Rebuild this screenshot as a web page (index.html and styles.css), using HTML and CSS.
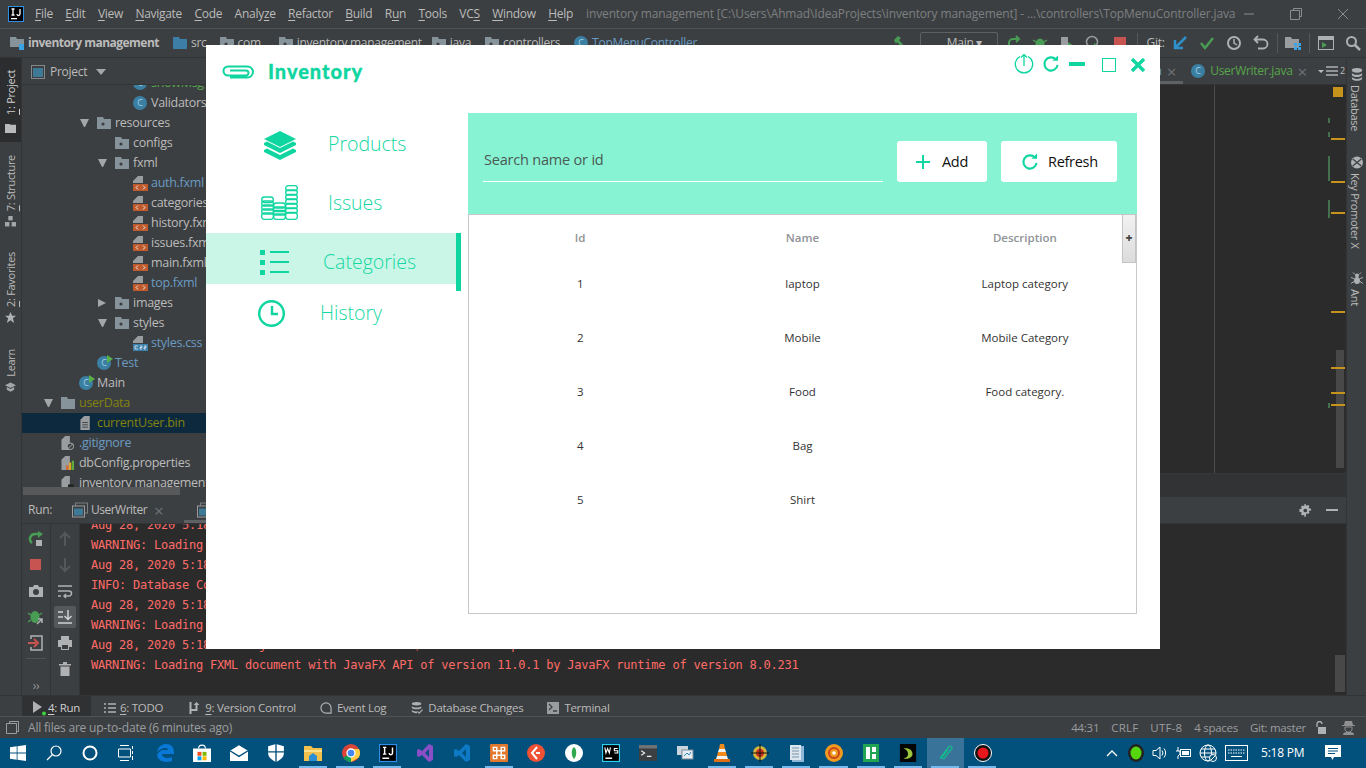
FILE: index.html
```html
<!DOCTYPE html>
<html lang="en">
<head>
<meta charset="utf-8">
<title>Inventory</title>
<link rel="stylesheet" href="styles.css">
</head>
<body>
<svg class="defs" aria-hidden="true">
  <symbol id="folder" viewBox="0 0 14 12"><path d="M0 0h6l1 2h7v10H0z" fill="#87939a"/><circle cx="6" cy="7" r="1.6" fill="#3c3f41"/></symbol>
  <symbol id="folderp" viewBox="0 0 14 12"><path d="M0 0h6l1 2h7v10H0z" fill="#87939a"/></symbol>
  <symbol id="fxml" viewBox="0 0 15 15"><path d="M5 0h5v7H0V5z" fill="#9a9da0"/><rect y="8" width="15" height="7" fill="#c0592b"/><path d="M5 9.5 3 11.500l2 2M10 9.500l2 2-2 2" fill="none" stroke="#eee" stroke-width="1"/></symbol>
  <symbol id="cssf" viewBox="0 0 15 15"><path d="M5 0h5v7H0V5z" fill="#9a9da0"/><rect y="8" width="15" height="7" fill="#3a82ab"/><path d="M2 10h3M2 13h3M2 10v3M7 10h2v1.500H7V13h2M11 10h2v1.500h-2V13h2" fill="none" stroke="#dde" stroke-width=".9"/></symbol>
  <symbol id="tabicon" viewBox="0 0 16 15"><rect x="3.500" y=".5" width="12" height="10" fill="none" stroke="#7b7f82"/><rect x=".5" y="3.500" width="12" height="11" fill="#3c3f41" stroke="#9a9da0"/><rect x="2" y="6" width="9" height="7" fill="#3e7a95"/></symbol>
</svg>

<div class="ide">
  <header class="menubar">
    <svg class="ij-logo" viewBox="0 0 16 16"><rect width="16" height="16" fill="#000"/><rect x=".5" y=".5" width="15" height="15" fill="none" stroke="#2f8fe6"/><rect x="3" y="12" width="6" height="1.300" fill="#fff"/><path d="M3.500 3h3M5 3v6M3.500 9h3M12 3v5a1.500 1.500 0 0 1-3 0" fill="none" stroke="#fff" stroke-width="1.300"/></svg>
    <nav class="menus">
      <span><u>F</u>ile</span><span><u>E</u>dit</span><span><u>V</u>iew</span><span><u>N</u>avigate</span><span><u>C</u>ode</span><span>Analy<u>z</u>e</span><span><u>R</u>efactor</span><span><u>B</u>uild</span><span>R<u>u</u>n</span><span><u>T</u>ools</span><span>VC<u>S</u></span><span><u>W</u>indow</span><span><u>H</u>elp</span>
    </nav>
    <span class="wintitle">inventory management [C:\Users\Ahmad\IdeaProjects\inventory management] - ...\controllers\TopMenuController.java</span>
    <div class="winctl">
      <svg viewBox="0 0 12 12"><path d="M1 6h10" stroke="#8a8d8f"/></svg>
      <svg viewBox="0 0 12 12"><path d="M3.500 2.500V.5h8v8h-2M.5 2.500h9v9h-9z" fill="none" stroke="#8a8d8f"/></svg>
      <svg viewBox="0 0 12 12"><path d="M1 1l10 10M11 1 1 11" stroke="#8a8d8f"/></svg>
    </div>
  </header>

  <div class="navbar">
    <div class="crumbs">
      <span class="crumb bold"><svg class="ic14" viewBox="0 0 14 14"><path d="M0 1h6l1 2h7v8H0z" fill="#87939a"/><rect x="9" y="8" width="6" height="6" fill="#3aa3e3"/></svg>inventory management</span>
      <span class="crumb"><svg class="ic14" viewBox="0 0 14 12"><path d="M0 0h6l1 2h7v10H0z" fill="#3d7ea6"/></svg>src</span>
      <span class="crumb"><svg class="ic14"><use href="#folder"/></svg>com</span>
      <span class="crumb"><svg class="ic14"><use href="#folder"/></svg>inventory.management</span>
      <span class="crumb"><svg class="ic14"><use href="#folder"/></svg>java</span>
      <span class="crumb"><svg class="ic14"><use href="#folder"/></svg>controllers</span>
      <span class="crumb blue"><span class="cls">C</span>TopMenuController</span>
    </div>
    <div class="navtools">
      <svg class="hammer" viewBox="0 0 16 16"><path d="M2 5l4-4 3 2-2 2 7 8-2 2-7-8-1 2z" fill="#499c54"/></svg>
      <span class="runcfg">Main ▾</span>
      <span class="tool"><svg viewBox="0 0 16 16"><path d="M3 13V8a4 4 0 0 1 4-4h5M10 1l3 3-3 3" fill="none" stroke="#499c54" stroke-width="2"/></svg></span>
      <span class="tool"><svg viewBox="0 0 16 16"><ellipse cx="8" cy="9" rx="4.500" ry="5.500" fill="#499c54"/><path d="M1 5l3 2M15 5l-3 2M1 13l3-2M15 13l-3-2" stroke="#499c54" stroke-width="1.500"/></svg></span>
      <span class="tool"><svg viewBox="0 0 16 16"><rect x="2" y="2" width="7" height="12" fill="#9a9da0"/><path d="M9 7l6 4-6 4z" fill="#499c54"/></svg></span>
      <span class="tool"><svg viewBox="0 0 16 16"><circle cx="7" cy="7" r="5.500" fill="none" stroke="#9a9da0" stroke-width="1.500"/><path d="M9 8l6 4-6 4z" fill="#499c54"/></svg></span>
      <span class="tool"><svg viewBox="0 0 16 16"><rect x="2" y="2" width="12" height="12" fill="#c75450"/></svg></span>
      <span class="sep s1"></span>
      <span class="gitlabel">Git:</span>
      <span class="tool t27"><svg viewBox="0 0 16 16"><path d="M14 2 4 12M3 5v8h8" fill="none" stroke="#2f8fc9" stroke-width="2.500"/></svg></span>
      <span class="tool t27"><svg viewBox="0 0 16 16"><path d="M2 8l4 5 8-10" fill="none" stroke="#499c54" stroke-width="2.500"/></svg></span>
      <span class="tool t27"><svg viewBox="0 0 16 16"><circle cx="8" cy="8" r="6" fill="none" stroke="#aeb0b2" stroke-width="2"/><path d="M8 4v4l3 2" fill="none" stroke="#aeb0b2" stroke-width="1.500"/></svg></span>
      <span class="tool t27"><svg viewBox="0 0 16 16"><path d="M5 1 1.500 4.500 5 8M2 4.500h8a4.500 4.500 0 0 1 0 9H5" fill="none" stroke="#aeb0b2" stroke-width="1.800"/></svg></span>
      <span class="sep s2"></span>
      <span class="tool t29"><svg viewBox="0 0 16 16"><path d="M0 2h6l1 2h7v9H0z" fill="#9a9da0"/><rect x="9" y="8" width="3" height="3" fill="#3aa3e3"/><rect x="13" y="8" width="3" height="3" fill="#3aa3e3"/><rect x="9" y="12" width="3" height="3" fill="#3aa3e3"/><rect x="13" y="12" width="3" height="3" fill="#3aa3e3"/></svg></span>
      <span class="sep s3"></span>
      <span class="tool t27"><svg viewBox="0 0 16 16"><rect x=".5" y="1.500" width="15" height="13" fill="none" stroke="#aeb0b2"/><rect x="1" y="2" width="14" height="3" fill="#aeb0b2"/><path d="M4 7l5 3-5 3z" fill="#499c54"/></svg></span>
      <span class="tool"><svg viewBox="0 0 16 16"><circle cx="6.500" cy="6.500" r="4.500" fill="none" stroke="#aeb0b2" stroke-width="2"/><path d="M10 10l5 5" stroke="#aeb0b2" stroke-width="2.500"/></svg></span>
    </div>
  </div>

  <div class="workspace">
    <aside class="lstripe">
      <div class="vtab active"><span class="vtext"><u>1</u>: Project</span><svg viewBox="0 0 12 10"><path d="M0 0h5l1 1h6v9H0z" fill="#b8babc"/></svg></div>
      <div class="vtab structure"><span class="vtext"><u>7</u>: Structure</span><svg viewBox="0 0 10 10"><rect x="3" width="4" height="4" fill="#a4a6a8"/><rect y="5.500" width="4" height="4" fill="#a4a6a8"/><rect x="6" y="5.500" width="4" height="4" fill="#a4a6a8"/></svg></div>
      <div class="vtab favorites"><span class="vtext"><u>2</u>: Favorites</span><svg viewBox="0 0 12 12"><path d="M6 0l1.800 4H12L8.600 6.800 10 12 6 9 2 12l1.400-5.200L0 4h4.200z" fill="#b0b2b4"/></svg></div>
      <div class="vtab learn"><span class="vtext">Learn</span><svg viewBox="0 0 12 11"><path d="M6 0l6 3-6 3-6-3z" fill="#a4a6a8"/><path d="M2 5v3l4 2 4-2V5L6 7z" fill="#a4a6a8"/></svg></div>
    </aside>

    <div class="center">
      <div class="upper">
        <section class="project">
          <div class="panelhead">
            <svg class="ic14" viewBox="0 0 14 14"><rect x=".5" y=".5" width="13" height="13" fill="none" stroke="#85888a"/><rect x="2" y="3" width="10" height="9" fill="#3e7a95"/></svg>
            <span>Project</span><span class="caret"></span>
          </div>
          <div class="tree">
            <div class="row l4 cut"><span class="arrow"></span><span class="cls">C</span><span class="green">showMsg</span></div>
            <div class="row l4"><span class="arrow"></span><span class="cls">C</span><span>Validators</span></div>
            <div class="row l2"><span class="arrow down"></span><svg class="ic14"><use href="#folder"/></svg><span>resources</span></div>
            <div class="row l3"><span class="arrow"></span><svg class="ic14"><use href="#folder"/></svg><span>configs</span></div>
            <div class="row l3"><span class="arrow down"></span><svg class="ic14"><use href="#folder"/></svg><span>fxml</span></div>
            <div class="row l4"><span class="arrow"></span><svg class="ic15"><use href="#fxml"/></svg><span class="blue">auth.fxml</span></div>
            <div class="row l4"><span class="arrow"></span><svg class="ic15"><use href="#fxml"/></svg><span>categories.fxml</span></div>
            <div class="row l4"><span class="arrow"></span><svg class="ic15"><use href="#fxml"/></svg><span>history.fxml</span></div>
            <div class="row l4"><span class="arrow"></span><svg class="ic15"><use href="#fxml"/></svg><span>issues.fxml</span></div>
            <div class="row l4"><span class="arrow"></span><svg class="ic15"><use href="#fxml"/></svg><span>main.fxml</span></div>
            <div class="row l4"><span class="arrow"></span><svg class="ic15"><use href="#fxml"/></svg><span class="blue">top.fxml</span></div>
            <div class="row l3"><span class="arrow right"></span><svg class="ic14"><use href="#folder"/></svg><span>images</span></div>
            <div class="row l3"><span class="arrow down"></span><svg class="ic14"><use href="#folder"/></svg><span>styles</span></div>
            <div class="row l4"><span class="arrow"></span><svg class="ic15"><use href="#cssf"/></svg><span class="blue">styles.css</span></div>
            <div class="row l2"><span class="arrow"></span><span class="cls runnable">C</span><span class="blue">Test</span></div>
            <div class="row l1"><span class="arrow"></span><span class="cls runnable">C</span><span>Main</span></div>
            <div class="row l0"><span class="arrow down"></span><svg class="ic14"><use href="#folderp"/></svg><span class="olive">userData</span></div>
            <div class="row l1 selected"><span class="arrow"></span><svg class="ic14" viewBox="0 0 14 15"><path d="M5 0h6v15H1V4z" fill="#9a9da0"/><path d="M3 7h6M3 9.500h6M3 12h6" stroke="#3c3f41"/></svg><span class="olive">currentUser.bin</span></div>
            <div class="row l0"><span class="arrow"></span><svg class="ic14" viewBox="0 0 14 15"><path d="M4 0h5v15H0V4z" fill="#9a9da0"/><circle cx="9.500" cy="11" r="3.500" fill="#3c3f41" stroke="#aeb0b2"/><path d="M7 13.500l5-5" stroke="#aeb0b2"/></svg><span class="blue">.gitignore</span></div>
            <div class="row l0"><span class="arrow"></span><svg class="ic14" viewBox="0 0 14 15"><path d="M4 0h5v15H0V4z" fill="#9a9da0"/><rect x="5" y="10" width="2.500" height="5" fill="#d9662f"/><rect x="8" y="7" width="2.500" height="8" fill="#e0a52b"/><rect x="11" y="5" width="2.500" height="10" fill="#5faa3c"/></svg><span>dbConfig.properties</span></div>
            <div class="row l0"><span class="arrow"></span><svg class="ic14" viewBox="0 0 14 15"><path d="M4 0h5v15H0V4z" fill="#9a9da0"/><rect x="7" y="9" width="6" height="6" fill="#222"/><path d="M8.500 12.500h3" stroke="#ddd"/></svg><span>inventory management.iml</span></div>
            <div class="hscroll"></div>
          </div>
        </section>

        <section class="editor">
          <div class="tabs">
            <div class="tab current"><span class="blue">TopMenuController.java</span><span class="x">×</span></div>
            <div class="tab"><span class="cls">C</span><span class="green">UserWriter.java</span><span class="x">×</span></div>
            <div class="tabmore"><span class="tiny-caret"></span><svg viewBox="0 0 12 10"><path d="M0 1h12M0 5h12M0 9h12" stroke="#aeb0b2" stroke-width="1.500"/></svg><span>2</span></div>
          </div>
          <div class="code">
            <span class="rmargin"></span>
            <span class="scrollv"></span>
            <span class="warn"></span>
            <span class="mk g g1"></span><span class="mk g g2"></span><span class="mk g g3"></span><span class="mk g g4"></span><span class="mk g g5"></span>
            <span class="mk o o1"></span><span class="mk o o2"></span><span class="mk o o3"></span><span class="mk o o4"></span><span class="mk o o5"></span><span class="mk o o6"></span><span class="mk o o7"></span>
          </div>
          <div class="editfoot"></div>
        </section>
      </div>

      <section class="runpanel">
        <div class="runhead">
          <span class="runlabel">Run:</span>
          <span class="runtab"><svg class="ic16"><use href="#tabicon"/></svg><span>UserWriter</span><span class="x">×</span></span>
          <span class="runtab on"><svg class="ic16"><use href="#tabicon"/></svg><span class="greendot"></span></span>
          <span class="grow"></span>
          <svg class="gear" viewBox="0 0 14 14"><path d="M7 0l1 2 2-.800 1 1L10.500 4.500l2.500.5v2l-2.500.5.800 2-1.300 1.300-2-.800L7 14H6l-.5-2.500-2 .800L2.200 11l.8-2L.5 8.500V5.500L3 5 2.200 3 3.500 1.700l2 .800L6 0z" fill="#afb1b3"/><circle cx="6.800" cy="7" r="2" fill="#3c3f41"/></svg>
          <svg class="dash" viewBox="0 0 12 12"><path d="M0 6h12" stroke="#afb1b3" stroke-width="2"/></svg>
        </div>
        <div class="runbody">
          <div class="rtools">
            <svg viewBox="0 0 16 16"><path d="M13 3H7a5 5 0 0 0-3 9" fill="none" stroke="#499c54" stroke-width="2.500"/><path d="M10 0l5 3-5 4z" fill="#499c54"/><rect x="8" y="9" width="6" height="6" fill="#afb1b3"/></svg>
            <svg viewBox="0 0 16 16"><rect x="2" y="2" width="11" height="11" fill="#c75450"/></svg>
            <svg viewBox="0 0 16 16"><path d="M1 4h4l1-2h4l1 2h4v10H1z" fill="#afb1b3"/><circle cx="8" cy="9" r="3" fill="#3c3f41"/></svg>
            <svg viewBox="0 0 16 16"><ellipse cx="7" cy="8" rx="4.500" ry="6" fill="#499c54"/><path d="M0 4l3 2M14 4l-3 2M0 13l3-2" stroke="#499c54" stroke-width="1.500"/><path d="M9 15l5-5M10 10h4v4" fill="none" stroke="#afb1b3" stroke-width="1.500"/></svg>
            <svg viewBox="0 0 16 16"><path d="M3 4V1h11v14H3v-3" fill="none" stroke="#afb1b3" stroke-width="1.500"/><path d="M0 8h8M6 4l4 4-4 4" fill="none" stroke="#c75450" stroke-width="2"/></svg>
            <span class="hrule"></span>
            <span class="more">››</span>
          </div>
          <div class="rtools second">
            <svg viewBox="0 0 16 16"><path d="M8 15V2M3 7l5-5 5 5" fill="none" stroke="#55585a" stroke-width="2"/></svg>
            <svg viewBox="0 0 16 16"><path d="M8 1v13M3 9l5 5 5-5" fill="none" stroke="#55585a" stroke-width="2"/></svg>
            <svg viewBox="0 0 16 16"><path d="M1 3h14M1 8h11a2.500 2.500 0 0 1 0 5H7M9 11l-2 2 2 2M1 13h3" fill="none" stroke="#afb1b3" stroke-width="1.500"/></svg>
            <span class="activebox"><svg viewBox="0 0 16 16"><path d="M1 3h5M1 8h5M1 14h14M11 1v9M7.500 7l3.500 3.500L14.500 7" fill="none" stroke="#d0d2d3" stroke-width="1.500"/></svg></span>
            <svg viewBox="0 0 16 16"><path d="M4 1h8v4H4zM1 5h14v7h-3v3H4v-3H1z" fill="#afb1b3"/><rect x="5" y="10" width="6" height="4" fill="#3c3f41"/></svg>
            <svg viewBox="0 0 16 16"><path d="M2 3h12v1.500H2zM6 1h4v2H6zM3.500 5.500h9V15h-9z" fill="#afb1b3"/></svg>
          </div>
          <pre class="console">Aug 28, 2020 5:18:02 PM javafx.fxml.FXMLLoader$ValueElement processValue
WARNING: Loading FXML document with JavaFX API of version 11.0.1 by JavaFX runtime of version 8.0.231
Aug 28, 2020 5:18:04 PM inventory.management.Main start
INFO: Database Connected
Aug 28, 2020 5:18:04 PM javafx.fxml.FXMLLoader$ValueElement processValue
WARNING: Loading FXML document with JavaFX API of version 11.0.1 by JavaFX runtime of version 8.0.231
Aug 28, 2020 5:18:09 PM javafx.fxml.FXMLLoader$ValueElement processValue
WARNING: Loading FXML document with JavaFX API of version 11.0.1 by JavaFX runtime of version 8.0.231</pre>
          <span class="conscroll"></span>
        </div>
      </section>
    </div>

    <aside class="rstripe">
      <div class="rtab database"><svg viewBox="0 0 12 14"><ellipse cx="6" cy="2.500" rx="5.500" ry="2.500" fill="#aeb0b2"/><path d="M.5 5c1 3 10 3 11 0v2.500c-1 3-10 3-11 0zM.5 9.500c1 3 10 3 11 0v2c-1 3-10 3-11 0z" fill="#aeb0b2"/></svg><span>Database</span></div>
      <div class="rtab keyp"><svg viewBox="0 0 14 14"><circle cx="7" cy="7" r="7" fill="#aeb0b2"/><path d="M2 3l10 8M12 3 2 11" stroke="#3c3f41" stroke-width="1.500"/></svg><span>Key Promoter X</span></div>
      <div class="rtab ant"><svg viewBox="0 0 12 12"><ellipse cx="6" cy="3" rx="2" ry="2" fill="#aeb0b2"/><ellipse cx="6" cy="8" rx="3" ry="3.500" fill="#aeb0b2"/><path d="M0 5l3 1M12 5 9 6M0 11l3-2M12 11 9 9M2 0l2 2M10 0 8 2" stroke="#aeb0b2"/></svg><span>Ant</span></div>
    </aside>
  </div>

  <div class="toolstrip">
    <span class="tw on"><svg class="tw-run" viewBox="0 0 14 16"><path d="M0 1l9 6-9 6z" fill="#afb1b3"/><circle cx="11" cy="13.500" r="2" fill="#3fd13f"/></svg><span class="lt"><u>4</u>: Run</span></span>
    <span class="tw todo"><svg viewBox="0 0 12 10"><path d="M0 1h2M4 1h8M0 5h2M4 5h8M0 9h2M4 9h8" stroke="#afb1b3" stroke-width="1.500"/></svg><span><u>6</u>: TODO</span></span>
    <span class="tw vc"><svg viewBox="0 0 11 12"><path d="M1 0h2v12H1zM3 7h4V3H5l3-3 3 3H9v6H3z" fill="#afb1b3"/></svg><span><u>9</u>: Version Control</span></span>
    <span class="tw ev"><svg viewBox="0 0 13 13"><path d="M12 12H6.500a5.500 5.500 0 1 1 5.500-5.500z" fill="none" stroke="#afb1b3" stroke-width="1.300"/></svg><span>Event Log</span></span>
    <span class="tw db"><svg viewBox="0 0 13 14"><ellipse cx="6" cy="2" rx="5.500" ry="2" fill="#aeb0b2"/><path d="M.5 5c1 2 10 2 11 0v2c-1 2-10 2-11 0zM.5 9c1 2 5 2 6 2v2c-2 0-5-.500-6-2z" fill="#aeb0b2"/><path d="M7 11l2 2 4-4" fill="none" stroke="#aeb0b2" stroke-width="1.300"/></svg><span>Database Changes</span></span>
    <span class="tw term"><svg viewBox="0 0 12 12"><rect width="12" height="12" fill="#9a9da0"/><path d="M2 2l3 3-3 3M6 9h4" fill="none" stroke="#3c3f41" stroke-width="1.300"/></svg><span>Terminal</span></span>
  </div>

  <footer class="status">
    <svg class="ic13" viewBox="0 0 13 13"><path d="M3.500 2.500V.5h9v10h-2M.5 2.500h10v10H.5z" fill="none" stroke="#9a9da0"/></svg>
    <span class="smsg">All files are up-to-date (6 minutes ago)</span>
    <span class="grow"></span>
    <span class="stat">44:31</span><span class="stat roomy">CRLF</span><span class="stat roomy">UTF-8</span><span class="stat">4 spaces</span><span class="stat">Git: master</span>
    <svg class="lock" viewBox="0 0 11 13"><path d="M2 6V3a2.500 2.500 0 0 1 5 0" fill="none" stroke="#afb1b3" stroke-width="1.300"/><rect x="3" y="6" width="8" height="7" fill="#afb1b3"/></svg>
    <svg class="hector" viewBox="0 0 13 14"><path d="M3 0h7l1 4h2v1H0V4h2z" fill="#8e9092"/><path d="M3 6h7v3l-2 2H5L3 9z" fill="none" stroke="#8e9092"/><path d="M1 14c0-3 3-3 5.500-3S12 11 12 14z" fill="#8e9092"/></svg>
  </footer>
</div>

<footer class="taskbar">
  <span class="tb"><svg viewBox="0 0 16 16"><path d="M0 2.300 6.700 1.300v6.300H0zM7.500 1.200 16 0v7.600H7.500zM0 8.400h6.700v6.300L0 13.700zM7.500 8.400H16V16l-8.500-1.200z" fill="#fff"/></svg></span>
  <span class="tb"><svg viewBox="0 0 16 16"><circle cx="10" cy="6" r="5" fill="none" stroke="#fff" stroke-width="1.200"/><path d="M6.500 9.500 1 15" stroke="#fff" stroke-width="1.300"/></svg></span>
  <span class="tb"><svg viewBox="0 0 16 16"><circle cx="8" cy="8" r="6.500" fill="none" stroke="#fff" stroke-width="2"/></svg></span>
  <span class="tb"><svg viewBox="0 0 16 16"><path d="M2 .5h9M2 15.500h9M.5 4h12v8H.5zM14.500 1v3M14.500 6v3M14.500 11v4" fill="none" stroke="#fff"/></svg></span>
  <span class="tb pin first"><svg viewBox="0 0 18 18"><path d="M1 8C2 2 7 0 10 0c5 0 8 3 8 9v1H6c0 4 6 5 10 3v4c-6 2-14 1-15-6 1-3 4-4 5-5h6c0-3-6-3-11 2z" fill="#0a78d7"/></svg></span>
  <span class="tb pin"><svg viewBox="0 0 16 16"><path d="M0 4h16v12H0z" fill="#fff"/><path d="M5 4a3 3 0 0 1 6 0" fill="none" stroke="#fff"/><rect x="4" y="7" width="3.500" height="3.500" fill="#f25022"/><rect x="8.500" y="7" width="3.500" height="3.500" fill="#7fba00"/><rect x="4" y="11" width="3.500" height="3.500" fill="#00a4ef"/><rect x="8.500" y="11" width="3.500" height="3.500" fill="#ffb900"/></svg></span>
  <span class="tb pin"><svg viewBox="0 0 16 14"><path d="M0 5l8-5 8 5v9H0z" fill="#fff"/><path d="M0 5l8 5 8-5" fill="none" stroke="#02507c" stroke-width="1.200"/></svg></span>
  <span class="tb pin"><svg viewBox="0 0 14 16"><path d="M7 0l7 2v6c0 4-3 6-7 8-4-2-7-4-7-8V2z" fill="#fff"/><path d="M7 0v16M0 7h14" stroke="#02507c" stroke-width="1.200"/></svg></span>
  <span class="tb pin live"><svg viewBox="0 0 18 16"><path d="M0 1h7l2 2h9v13H0z" fill="#f3c14b"/><rect x="0" y="5" width="18" height="2" fill="#fbe08a"/><path d="M5 16v-5l4-3 4 3v5z" fill="#2c8fd6"/></svg></span>
  <span class="tb pin live"><svg viewBox="0 0 18 18"><circle cx="9" cy="9" r="9" fill="#db4437"/><path d="M9 9 1.300 13.500A9 9 0 0 0 9 18z" fill="#0f9d58"/><path d="M9 5h8a9 9 0 0 1-.2 8.500L9 18z" fill="#ffcd40"/><circle cx="9" cy="9" r="4" fill="#4285f4" stroke="#fff" stroke-width="1.300"/></svg></span>
  <span class="tb pin live"><svg viewBox="0 0 16 16"><rect width="16" height="16" fill="#000"/><rect x=".5" y=".5" width="15" height="15" fill="none" stroke="#2f8fe6"/><rect x="3" y="12" width="6" height="1.300" fill="#fff"/><path d="M3.500 3h3M5 3v6M3.500 9h3M12 3v5a1.500 1.500 0 0 1-3 0" fill="none" stroke="#fff" stroke-width="1.300"/></svg></span>
  <span class="tb pin"><svg viewBox="0 0 16 18"><path d="M12 0l4 2v14l-4 2-7-7-3 2-2-1V6l2-1 3 2zM12 5 8 9l4 4z" fill="#8a4fc7" fill-rule="evenodd"/></svg></span>
  <span class="tb pin"><svg viewBox="0 0 16 18"><path d="M12 0l4 2v14l-4 2-7-7-3 2-2-1V6l2-1 3 2zM12 5 8 9l4 4z" fill="#0e7ac6" fill-rule="evenodd"/></svg></span>
  <span class="tb pin live"><svg viewBox="0 0 16 16"><rect width="16" height="16" rx="1" fill="#e2772e"/><path d="M3 3h3v3H3zM10 3h3v3h-3zM3 10h3v3H3zM10 10h3v3h-3zM6 6h4v4H6z" fill="none" stroke="#fff" stroke-width="1.300"/></svg></span>
  <span class="tb pin"><svg viewBox="0 0 18 18"><circle cx="9" cy="9" r="9" fill="#f05033"/><path d="M10 3 5 9l5 6M9 9h4" fill="none" stroke="#fff" stroke-width="2"/></svg></span>
  <span class="tb pin"><svg viewBox="0 0 18 18"><circle cx="9" cy="9" r="9" fill="#fff"/><path d="M9 3c3 2 3 9 0 12-3-3-3-10 0-12z" fill="#2fa84f"/></svg></span>
  <span class="tb pin"><svg viewBox="0 0 16 16"><rect width="16" height="16" fill="#000"/><rect x=".5" y=".5" width="15" height="15" fill="none" stroke="#2ed1f0"/><rect x="3" y="12" width="6" height="1.300" fill="#fff"/><path d="M2.500 3l1 5 1.500-4 1.500 4 1-5M14 4h-3v2h3v2h-3" fill="none" stroke="#fff"/></svg></span>
  <span class="tb pin"><svg viewBox="0 0 16 14"><rect width="16" height="14" fill="#3b3f42"/><rect width="16" height="3" fill="#6f7376"/><path d="M2 5l3 2-3 2M7 10h4" fill="none" stroke="#eee"/></svg></span>
  <span class="tb pin"><svg viewBox="0 0 18 18"><rect x="1" y="2" width="11" height="9" fill="#c9d6de"/><rect x="6" y="6" width="11" height="9" fill="#e6eef2" stroke="#7a8b96"/><path d="M8 12l3-3 2 2 2-3" fill="none" stroke="#2d89c9"/></svg></span>
  <span class="tb pin live"><svg viewBox="0 0 16 18"><path d="M6 0h4l1 5H5zM4 8h8l1 4H3z" fill="#f28a1c"/><path d="M5 5h6l1 3H4zM3 12h10l1 3H2z" fill="#f2f2f2"/><rect y="15" width="16" height="3" fill="#e06f12"/></svg></span>
  <span class="tb pin live"><svg viewBox="0 0 18 18"><circle cx="9" cy="9" r="7" fill="#d8b53a"/><circle cx="9" cy="9" r="4" fill="#c9301d"/><path d="M9 0v18M0 9h18" stroke="#111"/></svg></span>
  <span class="tb pin live"><svg viewBox="0 0 14 18"><path d="M2 2h12v16H2z" fill="#8fb8d8"/><path d="M0 1h11v15H0z" fill="#dbe6ee"/><path d="M2 4h7M2 7h7M2 10h7M2 13h7" stroke="#7b94a8"/></svg></span>
  <span class="tb pin live"><svg viewBox="0 0 18 18"><circle cx="9" cy="9" r="9" fill="#f09a1e"/><circle cx="9" cy="9" r="5" fill="none" stroke="#c9431c" stroke-width="2"/><circle cx="9" cy="9" r="1.800" fill="#fff"/></svg></span>
  <span class="tb pin live"><svg viewBox="0 0 16 18"><rect width="16" height="18" fill="#21a453"/><rect x="3" y="3" width="4" height="12" fill="#fff"/><rect x="9" y="3" width="4" height="5" fill="#fff"/><rect x="9" y="10" width="4" height="5" fill="#fff"/></svg></span>
  <span class="tb pin live"><svg viewBox="0 0 18 20"><rect width="18" height="20" fill="#050505"/><path d="M4 5c6-1 10 2 10 6s-5 6-10 5c3-1 5-2 5-5S7 6 4 5z" fill="#9bc53d"/></svg></span>
  <span class="tb pin live open"><svg viewBox="0 0 16 18"><path d="M3 15 12 3a2 2 0 0 1 3 2L7 15a1.300 1.300 0 0 1-2-1.500L11 6" fill="none" stroke="#16b98c" stroke-width="1.300" transform="translate(-1 -.5)"/></svg></span>
  <span class="tb pin live"><svg viewBox="0 0 18 18"><circle cx="9" cy="9" r="8.500" fill="#111" stroke="#fff"/><circle cx="9" cy="9" r="5.500" fill="#e8171d"/></svg></span>
  <span class="grow"></span>
  <div class="tray">
    <svg class="t-up" viewBox="0 0 12 7"><path d="M1 6l5-5 5 5" fill="none" stroke="#fff" stroke-width="1.300"/></svg>
    <svg class="t-green" viewBox="0 0 16 18"><ellipse cx="8" cy="9" rx="8" ry="9" fill="#222"/><ellipse cx="8" cy="9" rx="5.500" ry="6.500" fill="#56d60e"/></svg>
    <svg class="t-vol" viewBox="0 0 16 16"><path d="M1 5.500h3L8 2v12l-4-3.500H1z" fill="none" stroke="#fff"/><path d="M10 5.500a4 4 0 0 1 0 5M12 3.500a7 7 0 0 1 0 9" fill="none" stroke="#fff"/></svg>
    <svg class="t-bat" viewBox="0 0 16 16"><rect x="4.500" y="4.500" width="10" height="7" fill="none" stroke="#fff"/><rect x="6" y="6" width="7" height="4" fill="#fff"/><path d="M2 2v4M0 6h4v3L2 11v3" fill="none" stroke="#fff"/></svg>
    <svg class="t-globe" viewBox="0 0 18 18"><circle cx="9" cy="9" r="8" fill="none" stroke="#fff"/><ellipse cx="9" cy="9" rx="3.500" ry="8" fill="none" stroke="#fff"/><path d="M1 9h16M2 5h14M2 13h14" stroke="#fff"/><circle cx="14" cy="14" r="3.500" fill="#02507c" stroke="#fff"/><path d="M12 16l4-4" stroke="#fff"/></svg>
    <svg class="t-kbd" viewBox="0 0 23 16"><rect x=".5" y=".5" width="22" height="15" fill="none" stroke="#fff"/><path d="M3 5h17M3 8h17" stroke="#fff" stroke-dasharray="1.500 1"/><path d="M6 11.500h11" stroke="#fff"/></svg>
    <span class="clock">5:18 PM</span>
    <svg class="t-note" viewBox="0 0 16 16"><path d="M0 0h16v12H9l-1.500 3L6 12H0z" fill="#fff"/><path d="M3 3.500h10M3 6h10M3 8.500h7" stroke="#02507c"/></svg>
  </div>
</footer>

<main class="app">
  <div class="app-head">
    <svg class="clip" viewBox="0 0 32 14"><path d="M8 12.500H25.500a5.500 5.500 0 0 0 0-11H6a4.500 4.500 0 0 0 0 9H24a2.500 2.500 0 0 0 0-5H8" fill="none" stroke="#0fd6a0" stroke-width="2"/></svg>
    <h1 class="brand">Inventory</h1>
    <span class="grow"></span>
    <svg class="ctl c-power" viewBox="0 0 20 20"><path d="M6 2.500a8.700 8.700 0 1 0 8 0" fill="none" stroke="#0fd6a0" stroke-width="1.300"/><path d="M10 12V.5M7 3.500l3-3 3 3" fill="none" stroke="#0fd6a0" stroke-width="1.300"/></svg>
    <svg class="ctl c-refresh" viewBox="0 0 18 18"><path d="M14.500 4a7 7 0 1 0 2 6" fill="none" stroke="#0fd6a0" stroke-width="2.200"/><path d="M11 5.500h6V0z" fill="#0fd6a0"/></svg>
    <span class="ctl c-min"></span>
    <span class="ctl c-max"></span>
    <svg class="ctl c-close" viewBox="0 0 14 14"><path d="M1 1l12 12M13 1 1 13" stroke="#0fd6a0" stroke-width="3.400"/></svg>
  </div>
  <div class="app-body">
    <nav class="side">
      <a class="item products"><svg viewBox="0 0 32 29"><path d="M16 0l16 8-16 8L0 8z" fill="#0fd6a0"/><path d="M0 12l3-1.500L16 17l13-6.500 3 1.500v2l-16 8-16-8zM0 19l3-1.500L16 24l13-6.500 3 1.500v2l-16 8-16-8z" fill="#0fd6a0"/></svg><span>Products</span></a>
      <a class="item issues"><svg viewBox="0 0 37 35" fill="none" stroke="#0fd6a0" stroke-width="1.300"><rect x=".7" y="12" width="11.600" height="5.500" rx="2.700"/><rect x=".7" y="16" width="11.600" height="5" rx="2.500"/><rect x=".7" y="20" width="11.600" height="5" rx="2.500"/><rect x=".7" y="24" width="11.600" height="5" rx="2.500"/><rect x=".7" y="28" width="11.600" height="6.300" rx="2.500"/><rect x="12.700" y="18" width="11.600" height="5" rx="2.500"/><rect x="12.700" y="22" width="11.600" height="4.500" rx="2.200"/><rect x="12.700" y="25.500" width="11.600" height="4.500" rx="2.200"/><rect x="12.700" y="29" width="11.600" height="5.300" rx="2.200"/><rect x="24.700" y=".7" width="11.600" height="5" rx="2.500"/><rect x="24.700" y="5" width="11.600" height="5" rx="2.500"/><rect x="24.700" y="9.500" width="11.600" height="5" rx="2.500"/><rect x="24.700" y="14" width="11.600" height="5" rx="2.500"/><rect x="24.700" y="18.500" width="11.600" height="5" rx="2.500"/><rect x="24.700" y="23" width="11.600" height="5" rx="2.500"/><rect x="24.700" y="27.500" width="11.600" height="6.800" rx="2.500"/></svg><span>Issues</span></a>
      <a class="item categories"><svg viewBox="0 0 29 25"><path d="M0 0h5v5H0zM0 10h5v5H0zM0 20h5v5H0z" fill="#0fd6a0"/><path d="M10 2h19M10 12h19M10 22h19" stroke="#0fd6a0" stroke-width="2"/></svg><span>Categories</span></a>
      <a class="item history"><svg viewBox="0 0 27 27"><circle cx="13.500" cy="13.500" r="12.300" fill="none" stroke="#0fd6a0" stroke-width="2.400"/><path d="M14 6v8h6" fill="none" stroke="#0fd6a0" stroke-width="2.400"/></svg><span>History</span></a>
    </nav>
    <section class="content">
      <div class="toolbar">
        <label class="search">Search name or id</label>
        <button class="btn add"><svg viewBox="0 0 14 14"><path d="M7 0v14M0 7h14" stroke="#0fd6a0" stroke-width="2"/></svg><span>Add</span></button>
        <button class="btn refresh"><svg viewBox="0 0 18 18"><path d="M14.500 4a7 7 0 1 0 2 6" fill="none" stroke="#0fd6a0" stroke-width="2.200"/><path d="M11 5.500h6V0z" fill="#0fd6a0"/></svg><span>Refresh</span></button>
      </div>
      <div class="tablewrap">
        <span class="colmenu">+</span>
        <table>
          <thead><tr><th>Id</th><th>Name</th><th>Description</th></tr></thead>
          <tbody>
            <tr><td>1</td><td>laptop</td><td>Laptop category</td></tr>
            <tr><td>2</td><td>Mobile</td><td>Mobile Category</td></tr>
            <tr><td>3</td><td>Food</td><td>Food category.</td></tr>
            <tr><td>4</td><td>Bag</td><td></td></tr>
            <tr><td>5</td><td>Shirt</td><td></td></tr>
          </tbody>
        </table>
      </div>
    </section>
  </div>
</main>
</body>
</html>
```

FILE: styles.css
```css
* { box-sizing: border-box; }
html, body { margin: 0; padding: 0; }
body {
  width: 1366px; height: 768px; overflow: hidden; position: relative;
  background: #3c3f41; color: #bbb;
  font: 12px/16px "Open Sans", "Liberation Sans", sans-serif;
  letter-spacing: -.28px;
}
.defs { position: absolute; width: 0; height: 0; }
.grow { flex: 1; }
u { text-underline-offset: 2px; }
.blue { color: #6a9bc3; }
.green { color: #57a64a; }
.olive { color: #83830f; }
.ic13 { width: 13px; height: 13px; flex: none; }
.ic14 { width: 14px; height: 14px; flex: none; }
.ic15 { width: 15px; height: 15px; flex: none; }
.ic16 { width: 16px; height: 16px; flex: none; }

.ide { height: 738px; display: flex; flex-direction: column; }

/* menu */
.menubar { height: 29px; flex: none; display: flex; align-items: center; padding: 0 0 1px 8px; border-bottom: 1px solid #505254; background: #3c3f41; }
.ij-logo { width: 16px; height: 16px; flex: none; margin-right: 11px; }
.menus { display: flex; gap: 12.400px; color: #bbb; }
.wintitle { margin-left: 13px; color: #7c7f81; white-space: nowrap; letter-spacing: -.14px; }
.winctl { margin-left: auto; display: flex; gap: 35px; padding-right: 17px; }
.winctl svg { width: 12px; height: 12px; }

/* nav */
.navbar { height: 29px; flex: none; display: flex; align-items: center; padding-left: 10px; border-bottom: 1px solid #313335; }
.crumbs { display: flex; align-items: center; color: #bbb; white-space: nowrap; }
.crumb { display: flex; align-items: center; gap: 4px; margin-right: 14px; }
.crumb:nth-child(2) { margin-right: 13px; }
.crumb:nth-child(3) { margin-right: 18px; }
.crumb:nth-child(4) { margin-right: 10px; }
.crumb.bold { font-weight: 700; color: #bbb; letter-spacing: -.52px; }
.navtools { margin-left: auto; display: flex; align-items: center; height: 100%; }
.hammer { width: 16px; height: 16px; margin-right: 12px; }
.runcfg { width: 78px; height: 23px; border: 1px solid #5e6163; border-radius: 2px; padding: 2px 0 0 26px; margin-right: 2.750px; }
.tool { width: 26.500px; display: flex; justify-content: center; }
.tool.t27 { width: 27px; }
.tool.t29 { width: 29px; }
.tool svg { width: 16px; height: 16px; }
.sep { width: 1px; height: 20px; background: #55585a; }
.s1 { margin-left: 3.500px; }
.s2 { margin: 0 1px 0 2px; }
.s3 { margin: 0 3px 0 1px; }
.gitlabel { width: 16px; margin: 0 4px 0 9px; white-space: nowrap; }

/* workspace */
.workspace { flex: 1; min-height: 0; display: flex; }
.lstripe { width: 22px; flex: none; display: flex; flex-direction: column; border-right: 1px solid #323436; }
.vtab { display: flex; flex-direction: column; align-items: center; }
.vtab svg { width: 11px; height: 11px; margin-top: 5px; }
.vtext { writing-mode: vertical-rl; transform: rotate(180deg); line-height: 14px; white-space: nowrap; font-size: 11px; letter-spacing: -.3px; }
.vtab.active { height: 84px; background: #2b2d2f; padding-top: 12px; color: #d0d0d0; }
.vtab.active svg { margin-top: 8px; }
.structure { margin-top: 13px; }
.favorites { margin-top: 25px; }
.learn { margin-top: 26px; }

.center { flex: 1; min-width: 0; display: flex; flex-direction: column; }
.upper { height: 439px; flex: none; display: flex; }

.project { width: 280px; flex: none; display: flex; flex-direction: column; border-right: 1px solid #323436; }
.panelhead { height: 27px; flex: none; display: flex; align-items: center; gap: 5px; padding: 1px 0 0 9px; border-bottom: 1px solid #323436; font-size: 12px; }
.caret { border: 5px solid transparent; border-top: 6px solid #a4a6a8; border-bottom: 0; width: 0; margin-left: 4px; }
.tree { flex: 1; overflow: hidden; position: relative; font-size: 12.500px; }
.row { height: 20px; display: flex; align-items: center; white-space: nowrap; }
.cut { margin-top: -12px; }
.l0 { padding-left: 21px; } .l1 { padding-left: 39px; } .l2 { padding-left: 57px; } .l3 { padding-left: 75px; } .l4 { padding-left: 93px; }
.row > svg, .row > .cls { margin-right: 4px; }
.row > .ic15 { margin-right: 3px; }
.selected { background: #0d293e; }
.arrow { width: 18px; flex: none; display: block; height: 0; }
.arrow.down { border-top: 8px solid #a4a6a8; border-left: 4.500px solid transparent; border-right: 4.500px solid transparent; width: 9px; margin-left: 1px; margin-right: 8px; }
.arrow.right { border-left: 8px solid #a4a6a8; border-top: 4.500px solid transparent; border-bottom: 4.500px solid transparent; width: 8px; margin: 0 9px 0 1px; }
.cls { width: 14px; height: 14px; border-radius: 50%; background: #3b7fa3; color: #9fd0e8; font-size: 9px; line-height: 14px; text-align: center; flex: none; position: relative; letter-spacing: 0; }
.runnable::after { content: ""; position: absolute; right: -2px; top: -1px; border-left: 6px solid #57b04a; border-top: 4px solid transparent; border-bottom: 4px solid transparent; }
.hscroll { position: absolute; left: 1px; bottom: 2px; width: 157px; height: 8px; background: #565859; }

.editor { flex: 1; min-width: 0; display: flex; flex-direction: column; background: #2b2b2b; }
.tabs { height: 27px; flex: none; display: flex; justify-content: flex-end; align-items: stretch; background: #3c3f41; border-bottom: 1px solid #323436; }
.tab { display: flex; align-items: center; gap: 5px; padding: 0 3px 0 8px; font-size: 12px; white-space: nowrap; }
.tab.current { box-shadow: inset 0 -3px 0 #5f6264; background: #3c3f41; padding-right: 7px; }
.tab .x, .runtab .x { color: #6f7274; font-size: 17px; line-height: 1; }
.tabmore { width: 36px; display: flex; align-items: center; gap: 2px; font-size: 9px; padding-left: 8px; }
.tabmore svg { width: 12px; height: 10px; }
.tiny-caret { border: 3px solid transparent; border-top: 3px solid #bbb; border-bottom: 0; }
.code { flex: 1; position: relative; }
.rmargin { position: absolute; right: 131px; top: 0; bottom: 0; width: 1px; background: #4a4c4e; }
.scrollv { position: absolute; right: 2px; top: 265px; width: 8px; height: 118px; background: #484848; }
.warn { position: absolute; right: 3px; top: 2px; width: 10px; height: 10px; background: #c6941a; }
.mk { position: absolute; }
.mk.g { right: 16px; width: 2px; background: #43704d; }
.mk.o { right: 1px; width: 14px; height: 2px; background: #c6941a; }
.g1 { top: 33px; height: 5px; } .g2 { top: 47px; height: 5px; } .g3 { top: 71px; height: 25px; } .g4 { top: 115px; height: 18px; } .g5 { top: 318px; height: 5px; }
.o1 { top: 53px; } .o2 { top: 96px; } .o3 { top: 127px; } .o4 { top: 226px; } .o5 { top: 282px; } .o6 { top: 307px; } .o7 { top: 319px; }
.editfoot { height: 24px; flex: none; background: #313335; border-top: 1px solid #363739; }

/* run */
.runpanel { flex: 1; min-height: 0; display: flex; flex-direction: column; }
.runhead { height: 27px; flex: none; display: flex; align-items: center; background: #3c3f41; padding-left: 6px; border-bottom: 1px solid #323436; position: relative; z-index: 1; }
.runlabel { width: 44px; }
.runtab { display: flex; align-items: center; gap: 3px; letter-spacing: -.5px; }
.runtab .x { margin-left: 4px; }
.runtab.on { margin-left: 21px; height: 100%; width: 34px; padding-left: 13px; box-shadow: inset 0 -3px 0 #5f6264; position: relative; }
.greendot { position: absolute; left: 25px; top: 15px; width: 5px; height: 5px; border-radius: 50%; background: #21d121; }
.gear { width: 13px; height: 13px; margin-right: 14px; }
.dash { width: 12px; height: 12px; margin-right: 8px; }
.runbody { flex: 1; min-height: 0; display: flex; position: relative; background: #2b2b2b; }
.rtools { width: 29px; flex: none; background: #3c3f41; border-right: 1px solid #323436; display: flex; flex-direction: column; align-items: center; padding-top: 7px; gap: 10px; position: relative; z-index: 1; }
.rtools svg { width: 16px; height: 16px; flex: none; }
.hrule { width: 20px; height: 1px; background: #505254; margin-top: -3px; }
.more { font-size: 12px; line-height: 12px; margin-top: 11px; color: #999; }
.activebox { width: 22px; height: 22px; background: #55585a; border-radius: 2px; display: flex; align-items: center; justify-content: center; margin: -3px 0; }
.console { flex: 1; margin: -9px 0 0; padding-left: 11px; font: 12px/20px "DejaVu Sans Mono", monospace; letter-spacing: -.22px; color: #ff6b68; overflow: hidden; white-space: pre; }
.conscroll { position: absolute; right: 1px; bottom: 3px; width: 10px; height: 37px; background: #484848; }

.rstripe { width: 20px; flex: none; display: flex; flex-direction: column; align-items: center; border-left: 1px solid #323436; color: #bbb; }
.rtab { display: flex; flex-direction: column; align-items: center; }
.rtab svg { width: 12px; height: 13px; margin-bottom: 4px; }
.rtab span { writing-mode: vertical-rl; line-height: 14px; white-space: nowrap; font-size: 11px; padding-right: 4px; }
.database { margin-top: 10px; }
.keyp { margin-top: 25px; }
.ant { margin-top: 23px; }

/* bottom */
.toolstrip { height: 22px; flex: none; display: flex; align-items: center; padding-left: 22px; border-top: 1px solid #323436; border-bottom: 1px solid #505254; font-size: 11.500px; }
.tw { display: flex; align-items: center; gap: 5px; height: 100%; white-space: nowrap; padding-top: 3px; }
.tw svg { width: 12px; height: 12px; flex: none; }
.tw.on { width: 69px; padding-left: 11px; background: #2f3133; gap: 1px; color: #d0d0d0; }
.tw.on svg { width: 14px; height: 16px; }
.todo { margin-left: 13px; gap: 4px; }
.vc { margin-left: 25px; gap: 5px; }
.ev { margin-left: 24px; gap: 5px; }
.db { margin-left: 25px; gap: 5px; }
.term { margin-left: 24px; gap: 5px; }

.status { height: 21px; flex: none; display: flex; align-items: center; padding: 0 11px 0 6px; gap: 12px; color: #9a9da0; }
.smsg { margin-left: -3px; letter-spacing: -.2px; }
.stat { font-size: 11.500px; }
.stat.roomy { letter-spacing: .2px; }
.lock { width: 11px; height: 13px; margin-left: -3px; }
.hector { width: 13px; height: 14px; margin-left: 4px; }

.taskbar { height: 30px; display: flex; align-items: center; background: #02507c; position: relative; }
.tb { width: 36px; height: 30px; display: flex; align-items: center; justify-content: center; position: relative; flex: none; }
.tb svg { width: 16px; height: 16px; }
.tb.pin { width: 37.200px; }
.tb.pin svg { width: 18px; height: 18px; }
.tb.first { margin-left: 2px; }
.tb.live::after { content: ""; position: absolute; left: 4px; right: 5px; bottom: 0; height: 2px; background: #76b9ed; }
.tb.open { background: #3a739a; }
.tray { display: flex; align-items: center; height: 100%; color: #fff; padding-right: 25px; }
.tray svg { flex: none; }
.t-up { width: 12px; height: 7px; margin-right: 10px; }
.t-green { width: 16px; height: 18px; margin-right: 8px; }
.t-vol { width: 16px; height: 16px; margin-right: 8px; }
.t-bat { width: 16px; height: 16px; margin-right: 7px; }
.t-globe { width: 18px; height: 18px; margin-right: 8px; }
.t-kbd { width: 23px; height: 16px; margin-right: 13px; }
.clock { font-size: 12px; width: 64px; letter-spacing: -.2px; }
.t-note { width: 16px; height: 16px; }

/* app window */
.app { position: absolute; left: 206px; top: 45px; z-index: 10; width: 954px; height: 604px; background: #fff; display: flex; flex-direction: column; font-family: "Open Sans", "Liberation Sans", sans-serif; letter-spacing: 0; }
.app-head { height: 68px; flex: none; display: flex; align-items: flex-start; padding: 0 15px 0 16px; }
.clip { width: 32px; height: 14px; margin-top: 20px; flex: none; }
.brand { margin: 14px 0 0 14px; font: 900 20px/24px Lato, "Open Sans", sans-serif; letter-spacing: .95px; color: #0fd6a0; -webkit-text-stroke: .3px #0fd6a0; }
.ctl { flex: none; display: block; }
.c-power { width: 20px; height: 20px; margin-top: 9px; }
.c-refresh { width: 17px; height: 18px; margin: 10px 0 0 8px; }
.c-min { width: 16px; height: 4px; background: #0fd6a0; margin: 17px 0 0 10px; }
.c-max { width: 14px; height: 14px; border: 1.500px solid #0fd6a0; margin: 13px 0 0 17px; }
.c-close { width: 14px; height: 14px; margin: 13px 0 0 15px; }

.app-body { flex: 1; min-height: 0; display: flex; padding-bottom: 35px; }
.side { width: 262px; flex: none; display: flex; flex-direction: column; }
.item { display: flex; align-items: center; font-size: 19.500px; font-weight: 300; color: #14d8a2; }
.item svg { flex: none; }
.products { height: 60px; padding: 2px 0 0 58px; gap: 32px; }
.products svg { width: 32px; height: 29px; margin-top: 2px; }
.issues { height: 60px; padding-left: 55px; gap: 30px; }
.issues svg { width: 37px; height: 35px; margin-top: -1px; }
.categories { height: 51px; width: 250px; padding: 7px 0 0 54px; gap: 34px; background: #c9f6e7; position: relative; }
.categories svg { width: 29px; height: 25px; }
.categories::after { content: ""; position: absolute; left: 100%; top: 0; width: 5px; height: 58px; background: #0fd6a0; }
.history { height: 58px; padding-left: 52px; gap: 35px; }
.history svg { width: 27px; height: 27px; }

.content { width: 669px; flex: none; display: flex; flex-direction: column; }
.toolbar { height: 101px; flex: none; background: #88f3d3; display: flex; align-items: flex-start; padding: 28px 20px 0 15px; }
.search { width: 400px; height: 41px; margin-right: 14px; border-bottom: 1px solid #fff; font-size: 14.500px; line-height: 20px; color: #4a5a55; padding: 9px 0 0 1px; letter-spacing: -.2px; }
.btn { height: 41px; border: 0; border-radius: 3px; background: #fff; display: flex; align-items: center; font: 14.500px "Open Sans", sans-serif; letter-spacing: -.3px; color: #111; padding: 0; }
.add { width: 90px; padding-left: 19px; gap: 12px; margin-right: 14px; }
.add svg { width: 14px; height: 14px; }
.refresh { width: 116px; padding-left: 20px; gap: 10px; }
.refresh svg { width: 17px; height: 18px; }
.tablewrap { flex: 1; position: relative; border: 1px solid #c8c8c8; background: #fff; }
table { width: 100%; table-layout: fixed; border-collapse: collapse; font-size: 11.500px; color: #333; }
thead tr { height: 42px; }
th { height: 42px; padding: 4px 0 0; font-weight: 600; color: #8f9396; text-align: center; }
td { height: 54px; text-align: center; padding: 0; }
.colmenu { position: absolute; right: 0; top: -1px; width: 14px; height: 49px; background: linear-gradient(#f2f2f2, #dcdcdc); border: 1px solid #c4c4c4; color: #444; font-weight: 800; font-size: 12px; line-height: 46px; text-align: center; }
```
